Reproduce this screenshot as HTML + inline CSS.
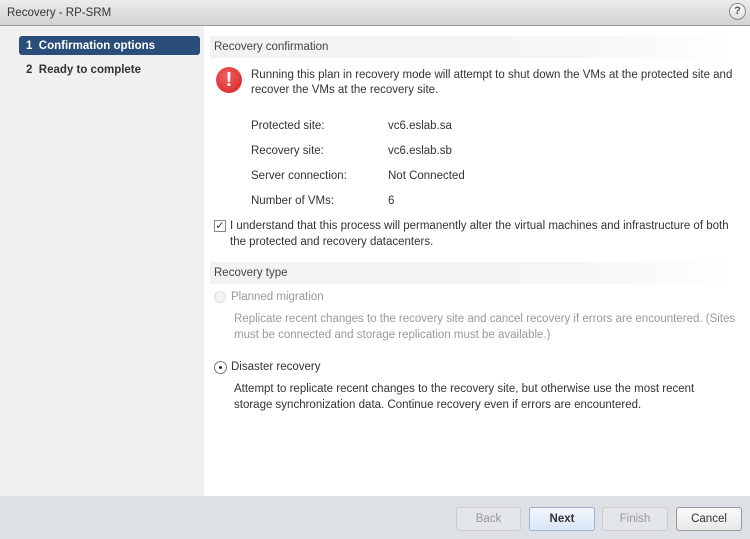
<!DOCTYPE html>
<html><head><style>
*{margin:0;padding:0;box-sizing:border-box}
body{width:750px;height:539px;position:relative;overflow:hidden;font-family:"Liberation Sans",Arial,sans-serif;font-size:11.5px;color:#333;background:#fff}
.t{position:absolute;white-space:nowrap;margin-top:1px}
#title{position:absolute;left:0;top:0;width:750px;height:26px;background:linear-gradient(#ececec,#d2d2d2);border-bottom:1px solid #9a9a9a}
#left{position:absolute;left:0;top:26px;width:204px;height:470px;background:#f0f0f0}
.hdr{position:absolute;left:210px;width:526px;height:22px;background:linear-gradient(90deg,#f2f2f2,#f6f6f6 70%,#fff);color:#444;padding:5px 4px}
#foot{position:absolute;left:0;top:496px;width:750px;height:43px;background:#dde1e6}
.btn{position:absolute;top:507px;height:24px;border:1px solid #b8b8b8;border-radius:3px;background:linear-gradient(#fafafa,#e8e8e8);text-align:center;line-height:23px}
.g{color:#999}
</style></head><body>
<div id="title"></div>
<div class="t" style="left:7px;top:6px;color:#333">Recovery - RP-SRM</div>
<div style="position:absolute;left:729px;top:3px;width:17px;height:17px;border-radius:50%;border:1px solid #888;background:linear-gradient(#fff,#ddd);font-size:11px;font-weight:bold;text-align:center;line-height:15px;color:#555">?</div>
<div id="left"></div>
<div style="position:absolute;left:19px;top:36px;width:181px;height:19px;background:#2a4d7a;border-radius:3px"></div>
<div class="t" style="left:26px;top:39px;color:#fff;font-weight:bold">1&nbsp; Confirmation options</div>
<div class="t" style="left:26px;top:63px;color:#333;font-weight:bold">2&nbsp; Ready to complete</div>

<div class="hdr" style="top:36px">Recovery confirmation</div>
<div style="position:absolute;left:216px;top:67px;width:26px;height:26px;border-radius:50%;background:radial-gradient(circle at 40% 35%,#f06060,#d42020);color:#fff;font-weight:bold;font-size:20px;text-align:center;line-height:26px">!</div>
<div class="t" style="left:251px;top:68px">Running this plan in recovery mode will attempt to shut down the VMs at the protected site and</div>
<div class="t" style="left:251px;top:83px">recover the VMs at the recovery site.</div>
<div class="t" style="left:251px;top:119px">Protected site:</div><div class="t" style="left:388px;top:119px">vc6.eslab.sa</div>
<div class="t" style="left:251px;top:144px">Recovery site:</div><div class="t" style="left:388px;top:144px">vc6.eslab.sb</div>
<div class="t" style="left:251px;top:169px">Server connection:</div><div class="t" style="left:388px;top:169px">Not Connected</div>
<div class="t" style="left:251px;top:194px">Number of VMs:</div><div class="t" style="left:388px;top:194px">6</div>
<div style="position:absolute;left:214px;top:220px;width:12px;height:12px;border:1px solid #888;background:#fff;font-size:11px;line-height:10px;text-align:center;color:#333">✓</div>
<div class="t" style="left:230px;top:219px">I understand that this process will permanently alter the virtual machines and infrastructure of both</div>
<div class="t" style="left:230px;top:235px">the protected and recovery datacenters.</div>

<div class="hdr" style="top:262px">Recovery type</div>
<div style="position:absolute;left:214px;top:291px;width:12px;height:12px;border-radius:50%;border:1px solid #ddd;background:#f4f4f4"></div>
<div class="t g" style="left:231px;top:290px">Planned migration</div>
<div class="t g" style="left:234px;top:312px">Replicate recent changes to the recovery site and cancel recovery if errors are encountered. (Sites</div>
<div class="t g" style="left:234px;top:328px">must be connected and storage replication must be available.)</div>
<div style="position:absolute;left:214px;top:361px;width:13px;height:13px;border-radius:50%;border:1px solid #777;background:#fff"><div style="position:absolute;left:4px;top:4px;width:3px;height:3px;border-radius:50%;background:#222"></div></div>
<div class="t" style="left:231px;top:360px">Disaster recovery</div>
<div class="t" style="left:234px;top:382px">Attempt to replicate recent changes to the recovery site, but otherwise use the most recent</div>
<div class="t" style="left:234px;top:398px">storage synchronization data. Continue recovery even if errors are encountered.</div>

<div id="foot"></div>
<div class="btn g" style="left:456px;width:65px;border-color:#ccc;background:#e2e5e9">Back</div>
<div class="btn" style="left:529px;width:66px;background:linear-gradient(#f3f7fd,#d9e6f7);border-color:#9fb3cc;font-weight:bold">Next</div>
<div class="btn g" style="left:602px;width:66px;border-color:#ccc;background:#e2e5e9">Finish</div>
<div class="btn" style="left:676px;width:66px;border-color:#999">Cancel</div>
</body></html>
